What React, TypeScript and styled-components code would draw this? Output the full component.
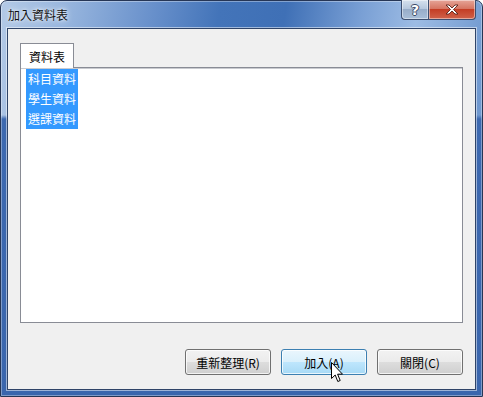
import { FC } from 'react';
import styled, { createGlobalStyle, css } from 'styled-components';

const GlobalStyle = createGlobalStyle`
  html, body {
    margin: 0;
    padding: 0;
    background: #ffffff;
  }
  body {
    width: 483px;
    height: 397px;
    overflow: hidden;
    font-family: 'Noto Sans CJK TC', 'Liberation Sans', sans-serif;
  }
`;

const Window = styled.div`
  box-sizing: border-box;
  width: 483px;
  height: 397px;
  display: flex;
  flex-direction: column;
  padding: 0 6px 6px;
  border: 1px solid #263656;
  border-radius: 7px 7px 0 0;
  background-image:
    linear-gradient(180deg, rgba(59, 102, 171, 0) 0, rgba(59, 102, 171, 0) 114px, #3d69b0 118px, #3a66ad 100%),
    linear-gradient(
      100deg,
      #b3c9e6 0%,
      #98b6de 12%,
      #6890cb 28%,
      #4374b9 40%,
      #3f70b6 52%,
      #7aa0d5 66%,
      #9dbce4 76%,
      #6f98cf 90%,
      #8aaede 100%
    );
  box-shadow: inset 0 0 0 1px rgba(255, 255, 255, 0.35);
`;

const TitleBar = styled.div`
  height: 27px;
  display: flex;
  align-items: center;
  justify-content: space-between;
`;

const Title = styled.span`
  padding-left: 1px;
  font-size: 12px;
  color: #111;
  text-shadow: 0 0 6px rgba(255, 255, 255, 0.9), 0 0 3px rgba(255, 255, 255, 0.8);
`;

const CaptionButtons = styled.div`
  align-self: flex-start;
  display: flex;
  margin-top: -1px;
  margin-right: 0;
`;

const CaptionButton = styled.div<{ $kind: 'help' | 'close' }>`
  box-sizing: border-box;
  height: 20px;
  display: flex;
  align-items: center;
  justify-content: center;
  border: 1px solid #3d4f70;
  border-top: none;
  box-shadow: inset 0 0 0 1px rgba(255, 255, 255, 0.45);
  ${({ $kind }) =>
    $kind === 'help'
      ? css`
          width: 27px;
          border-radius: 0 0 0 4px;
          border-right: none;
          background: linear-gradient(180deg, #d6e1ee 0%, #b7c8de 45%, #98adc9 50%, #a9bfd9 100%);
        `
      : css`
          width: 48px;
          border-radius: 0 0 4px 0;
          background: linear-gradient(180deg, #e6a598 0%, #d67663 45%, #c43e25 50%, #d0624a 100%);
        `}
`;

const HelpGlyph = styled.span`
  font-family: 'DejaVu Sans', sans-serif;
  font-weight: bold;
  font-size: 14px;
  line-height: 1;
  color: #fff;
  text-shadow: -1px 0 #3b4a66, 1px 0 #3b4a66, 0 -1px #3b4a66, 0 1px #3b4a66;
`;

const Client = styled.div`
  flex: 1;
  display: flex;
  flex-direction: column;
  padding: 14px 12px 14px 12px;
  border: 1px solid #2f4468;
  background: #f0f0f0;
  box-shadow: 0 0 0 1px rgba(255, 255, 255, 0.5);
`;

const TabStrip = styled.div`
  display: flex;
  height: 24px;
`;

const Tab = styled.div`
  box-sizing: border-box;
  position: relative;
  z-index: 1;
  height: 25px;
  padding: 0 8px;
  display: flex;
  align-items: center;
  border: 1px solid #898c95;
  border-bottom: none;
  background: #ffffff;
  font-size: 12px;
  color: #000;
`;

const Panel = styled.div`
  flex: 1;
  border: 1px solid #898c95;
  background: #ffffff;
  box-shadow: inset 0 1px 0 #c9cbd0;
  padding: 1px 5px;
`;

const ListItem = styled.div<{ $selected?: boolean }>`
  width: fit-content;
  height: 20px;
  line-height: 20px;
  padding: 0 2px;
  font-size: 12px;
  color: ${({ $selected }) => ($selected ? '#ffffff' : '#000000')};
  background: ${({ $selected }) => ($selected ? '#3399ff' : 'transparent')};
`;

const ButtonRow = styled.div`
  display: flex;
  justify-content: flex-end;
  gap: 10px;
  margin-top: 26px;
`;

const Button = styled.div<{ $hover?: boolean }>`
  box-sizing: border-box;
  position: relative;
  width: 86px;
  height: 26px;
  display: flex;
  align-items: center;
  justify-content: center;
  border-radius: 3px;
  font-size: 12px;
  color: #000;
  ${({ $hover }) =>
    $hover
      ? css`
          border: 1px solid #3c7fb1;
          background: linear-gradient(180deg, #eaf6fd 0%, #d9f0fc 50%, #bee6fd 51%, #a7d9f5 100%);
        `
      : css`
          border: 1px solid #707070;
          background: linear-gradient(180deg, #f2f2f2 0%, #ebebeb 50%, #dddddd 51%, #cfcfcf 100%);
        `}
  box-shadow: inset 0 0 0 1px rgba(255, 255, 255, 0.75);
`;

const Cursor = styled.svg`
  position: absolute;
  left: 49px;
  top: 12px;
`;

const tables = ['科目資料', '學生資料', '選課資料'];

const App: FC = () => {
  return (
    <>
      <GlobalStyle />
      <Window>
        <TitleBar>
          <Title>加入資料表</Title>
          <CaptionButtons>
            <CaptionButton $kind="help">
              <HelpGlyph>?</HelpGlyph>
            </CaptionButton>
            <CaptionButton $kind="close">
              <svg width="14" height="11" viewBox="0 0 14 11">
                <path
                  d="M1 1 L4 1 L7 4 L10 1 L13 1 L8.5 5.5 L13 10 L10 10 L7 7 L4 10 L1 10 L5.5 5.5 Z"
                  fill="#ffffff"
                  stroke="#5a2318"
                  strokeWidth="0.9"
                  strokeLinejoin="round"
                />
              </svg>
            </CaptionButton>
          </CaptionButtons>
        </TitleBar>
        <Client>
          <TabStrip>
            <Tab>資料表</Tab>
          </TabStrip>
          <Panel>
            {tables.map((t) => (
              <ListItem key={t} $selected>
                {t}
              </ListItem>
            ))}
          </Panel>
          <ButtonRow>
            <Button>重新整理(R)</Button>
            <Button $hover>
              加入(A)
              <Cursor width="13" height="21" viewBox="0 0 13 21">
                <path
                  d="M0.5 0.5 L0.5 16.5 L4.2 13 L6.8 19.5 L9.2 18.5 L6.6 12.2 L11.5 12.2 Z"
                  fill="#ffffff"
                  stroke="#000000"
                  strokeWidth="1"
                  strokeLinejoin="miter"
                />
              </Cursor>
            </Button>
            <Button>關閉(C)</Button>
          </ButtonRow>
        </Client>
      </Window>
    </>
  );
};

export default App;
